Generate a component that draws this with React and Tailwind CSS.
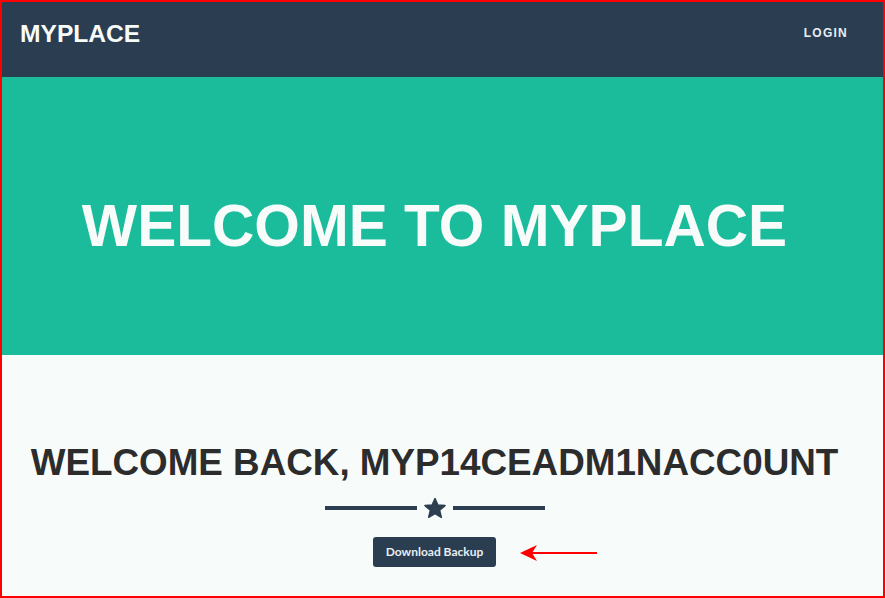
import React from "react";

const Star = () => (
  <svg width="24" height="22" viewBox="0 0 24 22" className="block">
    <polygon
      points="12,1.5 14.9,8 22,8.6 16.6,13.3 18.3,20.3 12,16.6 5.7,20.3 7.4,13.3 2,8.6 9.1,8"
      fill="#2c3e50"
      stroke="#2c3e50"
      strokeWidth="1.5"
      strokeLinejoin="round"
    />
  </svg>
);

const Arrow = () => (
  <svg width="80" height="20" viewBox="0 0 80 20" className="block">
    <line x1="6" y1="10" x2="78" y2="10" stroke="#ff0000" strokeWidth="2" />
    <path d="M1 10 L18 2 L13 10 L18 18 Z" fill="#ff0000" />
  </svg>
);

export default function App() {
  return (
    <div className="w-[885px] h-[598px] border-2 border-[#ff0000] overflow-hidden flex flex-col bg-[#f7fbf9] font-['Liberation_Sans',Arial,sans-serif]">
      <nav className="h-[75px] bg-[#2a3d51] flex justify-between items-start pl-[18px] pr-[35px]">
        <div className="pt-[20px] text-[24.6px] leading-none font-bold text-[#f7fbf9]">MYPLACE</div>
        <div className="pt-[25px] text-[12px] leading-none font-bold tracking-[1.25px] text-[#e8eef2]">LOGIN</div>
      </nav>

      <header className="h-[278px] bg-[#1abc9c] pt-[120px] pr-[16px] text-center">
        <h1 className="text-[58.6px] leading-none font-bold text-[#f7fbf9]">WELCOME TO MYPLACE</h1>
      </header>

      <main className="flex-1 pt-[90px] pr-[16px] flex flex-col items-center">
        <h2 className="text-[36.8px] leading-none font-bold text-[#2c2c2c] whitespace-nowrap">
          WELCOME BACK, MYP14CEADM1NACC0UNT
        </h2>
        <div className="mt-[14px] h-[24px] flex items-center gap-[6px]">
          <div className="w-[92px] h-[4px] bg-[#2c3e50]" />
          <Star />
          <div className="w-[92px] h-[4px] bg-[#2c3e50]" />
        </div>
        <div className="relative mt-[17px]">
          <button className="w-[123px] h-[30px] rounded-[3px] bg-[#2a3d51] text-[#e8eef2] text-[12px] font-bold font-['Lato',sans-serif]">
            Download Backup
          </button>
          <div className="absolute left-full top-[6px] ml-[23px]">
            <Arrow />
          </div>
        </div>
      </main>
    </div>
  );
}
